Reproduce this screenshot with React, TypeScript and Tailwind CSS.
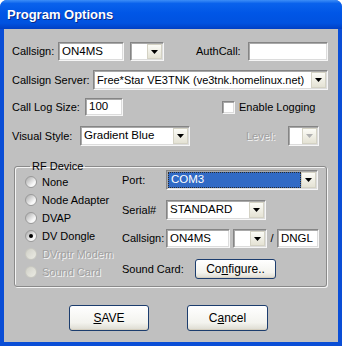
import React from 'react';

const sunken =
  'border border-t-[#858585] border-l-[#858585] border-b-[#f6f6f6] border-r-[#f6f6f6] shadow-[inset_1px_1px_0_#a9a9a9,inset_-1px_-1px_0_#dcdcdc]';

const Arrow = ({ disabled }: { disabled?: boolean }) => (
  <span className="w-[15px] h-full flex items-center justify-center bg-[linear-gradient(to_bottom,#fbfbf6,#e4e2d4)] border border-[#d4d2c4]">
    <svg width="7" height="4" viewBox="0 0 7 4">
      <path d="M0 0h7L3.5 4z" fill={disabled ? '#b0b0b0' : '#000'} />
    </svg>
  </span>
);

const Input = ({ w, value }: { w: string; value?: string }) => (
  <div className={`${w} h-full bg-white ${sunken} flex items-center pl-[3px] text-[11.5px]`}>{value}</div>
);

const Select = ({ w, value, disabled, small }: { w: string; value?: string; disabled?: boolean; small?: boolean }) => (
  <div className={`${w} h-full bg-white ${sunken} flex items-stretch p-[1px]`}>
    <div
      className={`flex-1 flex items-center pl-[2px] whitespace-nowrap overflow-hidden ${
        small ? 'text-[11px]' : 'text-[11.5px]'
      }`}
    >
      {value}
    </div>
    <Arrow disabled={disabled} />
  </div>
);

const Radio = ({ label, checked, disabled }: { label: string; checked?: boolean; disabled?: boolean }) => (
  <div className="h-[18px] flex items-center">
    <span
      className={`w-[12px] h-[12px] rounded-full border flex items-center justify-center ${
        disabled
          ? 'border-[#c8c8c0] bg-[linear-gradient(135deg,#d0d0c8,#ecece4)]'
          : 'border-[#9a9a9a] bg-[linear-gradient(135deg,#a8a8a8,#f8f8f8_70%)]'
      }`}
    >
      {checked && <span className="w-[4px] h-[4px] rounded-full bg-black" />}
    </span>
    <span
      className={`ml-[5px] ${disabled ? 'text-[#a0a0a0] [text-shadow:1px_1px_0_#f4f4f4]' : ''}`}
    >
      {label}
    </span>
  </div>
);

const XpButton = ({ w, h, children }: { w: string; h: string; children: React.ReactNode }) => (
  <div
    className={`${w} ${h} rounded-[3px] border border-[#1c3d6e] bg-[linear-gradient(to_bottom,#ffffff,#f3f3ee_70%,#dcdad0)] flex items-center justify-center text-[12px] shadow-[inset_0_-1px_0_#d6d0c0]`}
  >
    {children}
  </div>
);

export default function App() {
  return (
    <div className="w-[342px] h-[346px] flex flex-col rounded-t-[7px] overflow-hidden bg-[#0a4ed6] font-['Liberation_Sans',Arial,sans-serif] text-[11px] text-black">
      {/* Title bar */}
      <div className="h-[29px] shrink-0 flex items-center pl-[7px] bg-[linear-gradient(to_bottom,#3d8ef7_0%,#0a62ec_12%,#0056e6_45%,#0052e0_80%,#003fc4_100%)]">
        <span className="text-white text-[13px] font-bold [text-shadow:1px_1px_0_#0a2a8a]">Program Options</span>
      </div>

      {/* Body */}
      <div className="flex-1 mx-[4px] mb-[4px] bg-[#c0c0c0] flex flex-col">
        {/* Callsign row */}
        <div className="mt-[13px] h-[19px] pl-[8px] flex items-center">
          <span className="w-[46px]">Callsign:</span>
          <Input w="w-[66px]" value="ON4MS" />
          <div className="ml-[6px] h-full">
            <Select w="w-[34px]" />
          </div>
          <span className="ml-[32px] w-[52px]">AuthCall:</span>
          <Input w="w-[80px]" />
        </div>

        {/* Server row */}
        <div className="mt-[9px] h-[20px] pl-[8px] flex items-center">
          <span className="w-[81px]">Callsign Server:</span>
          <Select w="w-[235px]" value="Free*Star VE3TNK (ve3tnk.homelinux.net)" small />
        </div>

        {/* Log row */}
        <div className="mt-[8px] h-[18px] pl-[8px] flex items-center">
          <span className="w-[73px]">Call Log Size:</span>
          <Input w="w-[38px]" value="100" />
          <span className={`ml-[99px] w-[13px] h-[13px] bg-white ${sunken}`} />
          <span className="ml-[4px]">Enable Logging</span>
        </div>

        {/* Visual style row */}
        <div className="mt-[10px] h-[20px] pl-[8px] flex items-center">
          <span className="w-[68px]">Visual Style:</span>
          <Select w="w-[110px]" value="Gradient Blue" />
          <span className="ml-[56px] w-[42px] text-[#a0a0a0] [text-shadow:1px_1px_0_#f4f4f4]">Level:</span>
          <Select w="w-[31px]" disabled />
        </div>

        {/* RF Device group */}
        <fieldset className="mt-[14px] ml-[10px] w-[313px] border border-[#8a8a8a] rounded-[3px] shadow-[inset_1px_1px_0_#f4f4f4,1px_1px_0_#f4f4f4] pl-[10px] pr-0 pt-0 pb-[5px]">
          <legend className="ml-[5px] px-[2px] leading-[13px]">RF Device</legend>
          <div className="-mt-[3px] flex">
            <div className="w-[97px] mt-[3px] flex flex-col">
              <Radio label="None" />
              <Radio label="Node Adapter" />
              <Radio label="DVAP" />
              <Radio label="DV Dongle" checked />
              <Radio label="DVrptr Modem" disabled />
              <Radio label="Sound Card" disabled />
            </div>
            <div className="flex flex-col">
              <div className="h-[20px] flex items-center">
                <span className="w-[44px]">Port:</span>
                <div className={`w-[152px] h-full bg-white ${sunken} flex items-stretch p-[1px]`}>
                  <div className="flex-1 flex items-center border border-dotted border-[#2a2a2a] bg-[#316ac5] text-white text-[11.5px] pl-[2px]">
                    COM3
                  </div>
                  <Arrow />
                </div>
              </div>
              <div className="mt-[10px] h-[20px] flex items-center">
                <span className="w-[44px]">Serial#</span>
                <Select w="w-[100px]" value="STANDARD" />
              </div>
              <div className="mt-[9px] h-[19px] flex items-center">
                <span className="w-[44px]">Callsign:</span>
                <Input w="w-[64px]" value="ON4MS" />
                <div className="ml-[3px] h-full">
                  <Select w="w-[34px]" />
                </div>
                <span className="w-[10px] text-center">/</span>
                <Input w="w-[42px]" value="DNGL" />
              </div>
              <div className="mt-[11px] h-[20px] flex items-center">
                <span className="w-[73px]">Sound Card:</span>
                <XpButton w="w-[81px]" h="h-[20px]">
                  <span>
                    Co<span className="underline">n</span>figure..
                  </span>
                </XpButton>
              </div>
            </div>
          </div>
        </fieldset>

        {/* Buttons */}
        <div className="mt-[18px] pl-[65px] flex gap-[38px]">
          <XpButton w="w-[80px]" h="h-[26px]">
            <span>
              <span className="underline">S</span>AVE
            </span>
          </XpButton>
          <XpButton w="w-[81px]" h="h-[26px]">
            <span>
              C<span className="underline">a</span>ncel
            </span>
          </XpButton>
        </div>
      </div>
    </div>
  );
}
